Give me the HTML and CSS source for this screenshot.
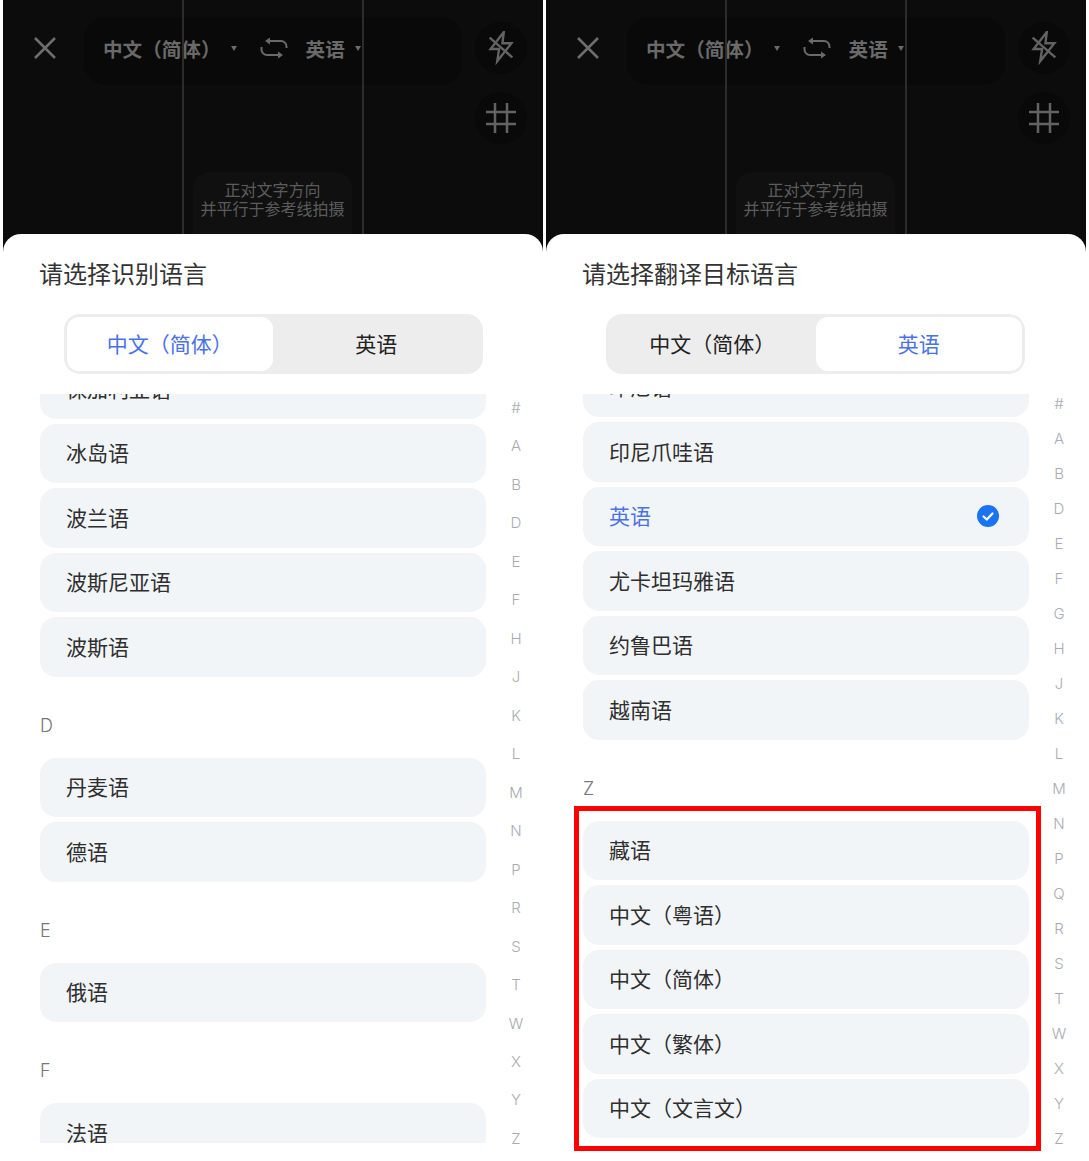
FILE: index.html
```html
<!DOCTYPE html>
<html lang="zh-CN">

<head>
    <meta charset="UTF-8">
    <meta name="viewport" content="width=device-width, initial-scale=1.0">
    <title>选择语言</title>
    <link rel="stylesheet" href="styles.css">
</head>

<body>
    <div class="screens">
        <!-- left: source language -->
        <div class="screen">
            <div class="camera">
                <span class="guide guide1"></span>
                <span class="guide guide2"></span>
                <div class="cam-main">
                    <div class="topbar">
                        <svg class="close" viewBox="0 0 22 22"><path d="M1 1L21 21M21 1L1 21" /></svg>
                        <div class="pill">
                            <span class="pill-lang">中文（简体）</span>
                            <span class="caret caret1"></span>
                            <svg class="swap" viewBox="0 0 28 22"><path d="M9 4H21a5.500 5.500 0 0 1 5.500 5.500V11M19 18H7a5.500 5.500 0 0 1-5.500-5.500V10" /><path class="head" d="M10 0.500L5 4l5 3.500zM18 14.500L23 18l-5 3.500z" /></svg>
                            <span class="pill-lang">英语</span>
                            <span class="caret caret2"></span>
                        </div>
                    </div>
                    <div class="hint">正对文字方向<br>并平行于参考线拍摄</div>
                </div>
                <div class="cam-tools">
                    <div class="tool">
                        <svg viewBox="0 1 30 36"><path d="M18 2L4 20H13L11 33L26 14H16.500Z" /><path d="M3 8L27 29" /></svg>
                    </div>
                    <div class="tool">
                        <svg viewBox="0 0 32 32"><path d="M10 1V31M22 1V31M1 10H31M1 22H31" /></svg>
                    </div>
                </div>
            </div>
            <div class="sheet">
                <div class="sheet-title">请选择识别语言</div>
                <div class="seg seg-left">
                    <div class="seg-item seg-active">中文（简体）</div>
                    <div class="seg-item">英语</div>
                </div>
                <div class="body">
                    <div class="list">
                        <div class="list-inner list-inner-left">
                            <div class="group">
                                <div class="item">保加利亚语</div>
                                <div class="item">冰岛语</div>
                                <div class="item">波兰语</div>
                                <div class="item">波斯尼亚语</div>
                                <div class="item">波斯语</div>
                            </div>
                            <div class="letter">D</div>
                            <div class="group">
                                <div class="item">丹麦语</div>
                                <div class="item">德语</div>
                            </div>
                            <div class="letter">E</div>
                            <div class="group">
                                <div class="item">俄语</div>
                            </div>
                            <div class="letter">F</div>
                            <div class="group">
                                <div class="item">法语</div>
                            </div>
                        </div>
                    </div>
                    <div class="index index-left">
                        <span>#</span><span>A</span><span>B</span><span>D</span><span>E</span><span>F</span><span>H</span><span>J</span><span>K</span><span>L</span><span>M</span><span>N</span><span>P</span><span>R</span><span>S</span><span>T</span><span>W</span><span>X</span><span>Y</span><span>Z</span>
                    </div>
                </div>
            </div>
        </div>

        <!-- right: target language -->
        <div class="screen">
            <div class="camera">
                <span class="guide guide1"></span>
                <span class="guide guide2"></span>
                <div class="cam-main">
                    <div class="topbar">
                        <svg class="close" viewBox="0 0 22 22"><path d="M1 1L21 21M21 1L1 21" /></svg>
                        <div class="pill">
                            <span class="pill-lang">中文（简体）</span>
                            <span class="caret caret1"></span>
                            <svg class="swap" viewBox="0 0 28 22"><path d="M9 4H21a5.500 5.500 0 0 1 5.500 5.500V11M19 18H7a5.500 5.500 0 0 1-5.500-5.500V10" /><path class="head" d="M10 0.500L5 4l5 3.500zM18 14.500L23 18l-5 3.500z" /></svg>
                            <span class="pill-lang">英语</span>
                            <span class="caret caret2"></span>
                        </div>
                    </div>
                    <div class="hint">正对文字方向<br>并平行于参考线拍摄</div>
                </div>
                <div class="cam-tools">
                    <div class="tool">
                        <svg viewBox="0 1 30 36"><path d="M18 2L4 20H13L11 33L26 14H16.500Z" /><path d="M3 8L27 29" /></svg>
                    </div>
                    <div class="tool">
                        <svg viewBox="0 0 32 32"><path d="M10 1V31M22 1V31M1 10H31M1 22H31" /></svg>
                    </div>
                </div>
            </div>
            <div class="sheet">
                <div class="sheet-title">请选择翻译目标语言</div>
                <div class="seg seg-right">
                    <div class="seg-item">中文（简体）</div>
                    <div class="seg-item seg-active">英语</div>
                </div>
                <div class="body">
                    <div class="list">
                        <div class="list-inner list-inner-right">
                            <div class="group">
                                <div class="item">印尼语</div>
                                <div class="item">印尼爪哇语</div>
                                <div class="item item-on">英语
                                    <svg class="check" viewBox="0 0 22 22"><circle cx="11" cy="11" r="11" /><path d="M6.500 11.500L9.800 14.500L15.500 8.500" /></svg>
                                </div>
                                <div class="item">尤卡坦玛雅语</div>
                                <div class="item">约鲁巴语</div>
                                <div class="item">越南语</div>
                            </div>
                            <div class="letter">Z</div>
                            <div class="group">
                                <div class="item">藏语</div>
                                <div class="item">中文（粤语）</div>
                                <div class="item">中文（简体）</div>
                                <div class="item">中文（繁体）</div>
                                <div class="item">中文（文言文）</div>
                            </div>
                        </div>
                    </div>
                    <div class="index index-right">
                        <span>#</span><span>A</span><span>B</span><span>D</span><span>E</span><span>F</span><span>G</span><span>H</span><span>J</span><span>K</span><span>L</span><span>M</span><span>N</span><span>P</span><span>Q</span><span>R</span><span>S</span><span>T</span><span>W</span><span>X</span><span>Y</span><span>Z</span>
                    </div>
                </div>
            </div>
            <div class="redbox"></div>
        </div>
    </div>
</body>

</html>
```

FILE: styles.css
```css
* {
    box-sizing: border-box;
}

body {
    margin: 0;
    background: #fff;
    font-family: "Noto Sans CJK SC", "Noto Sans", sans-serif;
}

.screens {
    display: flex;
    gap: 3px;
    padding: 0 3px;
    height: 1161px;
    overflow: hidden;
}

.screen {
    position: relative;
    width: 540px;
    height: 1161px;
    background: #0c0c0c;
    display: flex;
    flex-direction: column;
}

/* camera part */
.camera {
    position: relative;
    height: 234px;
    display: flex;
    flex-shrink: 0;
}

.guide {
    position: absolute;
    z-index: 1;
    top: 0;
    bottom: 0;
    width: 2px;
    background: #2c2c2c;
}

.guide1 {
    left: 179px;
}

.guide2 {
    left: 359px;
}

.cam-main {
    width: 472px;
    display: flex;
    flex-direction: column;
}

.topbar {
    display: flex;
    align-items: center;
    margin-top: 17px;
}

.close {
    width: 22px;
    height: 22px;
    margin: 0 28px 6px 31px;
    fill: none;
    stroke: #6e6e6e;
    stroke-width: 2.500;
}

.pill {
    flex: 1;
    margin-right: 13px;
    height: 68px;
    padding: 0 0 6px 19px;
    border-radius: 22px;
    background: #090909;
    display: flex;
    align-items: center;
}

.pill-lang {
    font-size: 19.600px;
    font-weight: 700;
    color: #6a6a6a;
}

.caret {
    width: 0;
    height: 0;
    border-left: 3px solid transparent;
    border-right: 3px solid transparent;
    border-top: 5px solid #6a6a6a;
}

.caret1 {
    margin: 0 23px 0 10px;
}

.caret2 {
    margin-left: 10px;
}

.swap {
    width: 28px;
    height: 22px;
    margin-right: 18px;
    fill: none;
    stroke: #6a6a6a;
    stroke-width: 2;
}

.swap .head {
    fill: #6a6a6a;
    stroke: none;
}

.hint {
    align-self: flex-start;
    margin: auto 0 0 190px;
    width: 159px;
    height: 62px;
    padding-top: 8px;
    border-radius: 16px 16px 0 0;
    background: #101010;
    text-align: center;
    font-size: 16px;
    line-height: 19px;
    color: #5c5c5c;
    white-space: nowrap;
}

.cam-tools {
    display: flex;
    flex-direction: column;
    gap: 18px;
    padding-top: 22px;
}

.tool {
    width: 52px;
    height: 52px;
    border-radius: 50%;
    background: #090909;
    display: flex;
    align-items: center;
    justify-content: center;
}

.tool svg {
    height: 34px;
    width: 32px;
    fill: none;
    stroke: #636363;
    stroke-width: 2.500;
}

/* white sheet */
.sheet {
    flex: 1;
    background: #fff;
    border-radius: 18px 18px 0 0;
    padding-left: 37px;
    min-height: 0;
}

.sheet-title {
    margin: 21px 0 23px -1px;
    height: 36px;
    font-size: 24px;
    line-height: 36px;
    color: #333;
}

.seg {
    display: flex;
    width: 419px;
    height: 60px;
    border-radius: 16px;
    background: #ededed;
    border: 3px solid #ededed;
    font-size: 21px;
    color: #222;
}

.seg-left {
    margin-left: 23.500px;
}

.seg-right {
    margin-left: 23px;
}

.seg-item {
    width: 50%;
    display: flex;
    align-items: center;
    justify-content: center;
    padding-bottom: 2px;
    border-radius: 12px;
}

.seg-active {
    background: #fff;
    color: #4a72e8;
}

.body {
    display: flex;
    align-items: flex-start;
    margin-top: 20px;
}

.list {
    width: 446px;
    height: 749px;
    overflow: hidden;
}

.list-inner-left {
    margin-top: -35px;
}

.list-inner-right {
    margin-top: -36.500px;
}

.group {
    display: flex;
    flex-direction: column;
    gap: 5px;
}

.item {
    display: flex;
    align-items: center;
    justify-content: space-between;
    height: 59.500px;
    flex-shrink: 0;
    padding: 0 30px 2px 26px;
    border-radius: 16px;
    background: #f2f5f8;
    font-size: 21px;
    color: #2e2e2e;
}

.item-on {
    color: #4a72e8;
}

.check {
    width: 22px;
    height: 22px;
    margin-top: 2px;
}

.check circle {
    fill: #1a73f0;
}

.check path {
    fill: none;
    stroke: #fff;
    stroke-width: 2.200;
    stroke-linecap: round;
    stroke-linejoin: round;
}

.letter {
    height: 81px;
    padding-top: 37px;
    font-family: "Inter", sans-serif;
    font-size: 18px;
    font-weight: 300;
    line-height: 24px;
    color: #777;
}

.index {
    display: flex;
    flex-direction: column;
    justify-content: space-between;
    width: 32px;
    margin-left: 14px;
    font-family: "Inter", sans-serif;
    font-size: 15px;
    font-weight: 300;
    line-height: 20px;
    color: #a8acb2;
    text-align: center;
}

.index-left {
    height: 751px;
    margin-top: 4px;
}

.index-right {
    height: 755px;
    margin-top: 0;
}

/* annotation frame */
.redbox {
    position: absolute;
    left: 28px;
    top: 806px;
    width: 467px;
    height: 345px;
    border: 5px solid #f00;
}
```
